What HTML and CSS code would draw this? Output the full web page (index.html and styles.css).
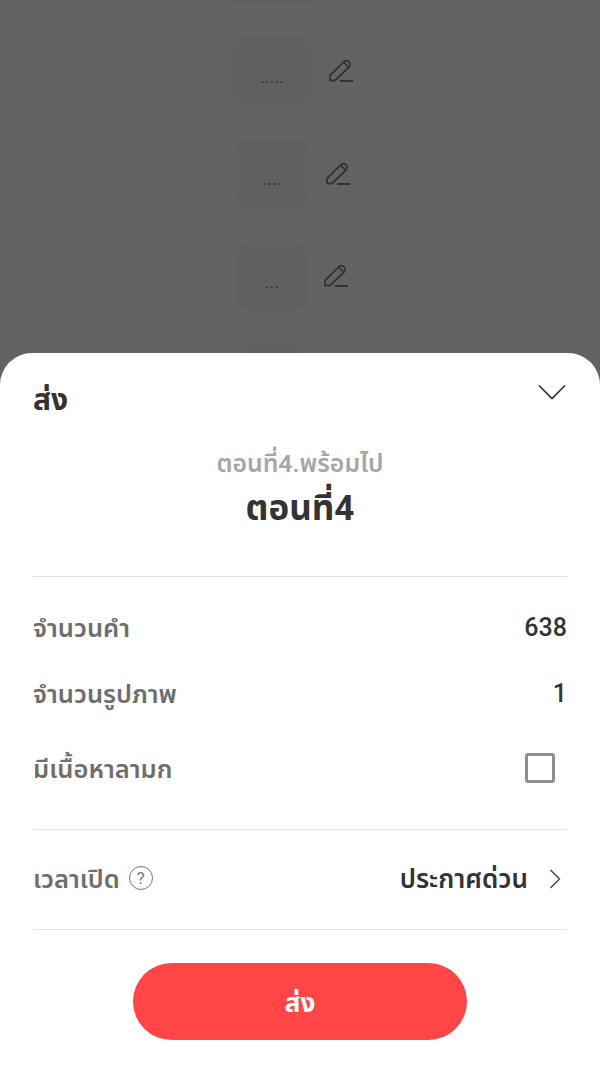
FILE: index.html
```html
<!DOCTYPE html>
<html lang="th">
<head>
<meta charset="utf-8">
<title>ส่ง</title>
<link rel="stylesheet" href="styles.css">
</head>
<body>
<svg class="defs" width="0" height="0" aria-hidden="true">
  <symbol id="pen" viewBox="0 0 26 24">
    <path d="M2 21.5 V16.5 L15.8 2.8 C17.2 1.4 19.6 1.4 21 2.8 C22.4 4.2 22.4 6.6 21 8 L7 21.5 Z M16 3.5 L20.5 8.2" fill="none" stroke="#333" stroke-width="1.8" stroke-linejoin="round"/>
    <path d="M12 22 H25" fill="none" stroke="#333" stroke-width="2"/>
  </symbol>
</svg>
<main class="screen">
  <div class="list">
    <div class="item"><div class="box box-top"></div></div>
    <div class="item"><div class="box box-5"><span class="dots">.....</span></div><svg class="pen"><use href="#pen"/></svg></div>
    <div class="item"><div class="box box-4"><span class="dots">....</span></div><svg class="pen"><use href="#pen"/></svg></div>
    <div class="item"><div class="box box-3"><span class="dots">...</span></div><svg class="pen"><use href="#pen"/></svg></div>
    <div class="item"><div class="box box-2"></div></div>
  </div>
  <section class="sheet">
    <header class="sheet-head">
      <h2 class="sheet-title">ส่ง</h2>
      <svg class="chevron-down" viewBox="0 0 28 16"><path d="M1 1.5 L14 14.5 L27 1.5" fill="none" stroke="#333" stroke-width="1.7"/></svg>
    </header>
    <div class="heading">
      <p class="book">ตอนที่4.พร้อมไป</p>
      <p class="chapter">ตอนที่4</p>
    </div>
    <div class="stats">
      <div class="row row-words"><span class="label">จำนวนคำ</span><span class="value">638</span></div>
      <div class="row row-images"><span class="label">จำนวนรูปภาพ</span><span class="value">1</span></div>
      <div class="row row-adult"><span class="label">มีเนื้อหาลามก</span><span class="check"></span></div>
    </div>
    <div class="row-time">
      <span class="time-left"><span class="label label-time">เวลาเปิด</span><span class="help">?</span></span>
      <span class="time-right"><span class="time-value">ประกาศด่วน</span>
      <svg class="chevron-right" viewBox="0 0 12 20"><path d="M1.5 1 L10.5 10 L1.5 19" fill="none" stroke="#444" stroke-width="1.4"/></svg></span>
    </div>
    <div class="actions"><button class="submit" type="button">ส่ง</button></div>
  </section>
</main>
</body>
</html>
```
FILE: styles.css
```css
* { box-sizing: border-box; }
html, body { margin: 0; padding: 0; }
body { font-family: Roboto, "Noto Sans Thai", "Noto Sans", "Liberation Sans", sans-serif; background: #636363; }
.defs { position: absolute; }
.screen { position: relative; width: 600px; height: 1073px; overflow: hidden; background: #636363; }

.list { display: flex; flex-direction: column; align-items: center; gap: 33.5px; margin-top: -66px; padding-right: 56px; }
.item { display: flex; align-items: center; height: 69px; }
.box { height: 69px; border-radius: 16px; background: #606060; display: flex; align-items: center; justify-content: center; padding-top: 11px; }
.box-top { width: 98px; }
.box-5 { width: 82px; }
.box-4 { width: 76px; }
.box-3 { width: 72px; }
.box-2 { width: 60px; }
.dots { font-size: 18px; color: #3a3a3a; line-height: 1; }
.pen { width: 26px; height: 24px; flex: none; margin-left: 15px; margin-right: -41px; }

.sheet { position: absolute; left: 0; right: 0; bottom: 0; height: 720.5px; background: #fff; border-radius: 32px 32px 0 0; padding: 0 33px; }
.sheet-head { display: flex; justify-content: space-between; align-items: flex-start; height: 80px; }
.sheet-title { margin: 27px 0 0; font-size: 30px; line-height: 40px; font-weight: 700; color: #333; }
.chevron-down { width: 28px; height: 16px; margin: 31px 1px 0 0; }
.heading { text-align: center; height: 144px; border-bottom: 1px solid #e2e2e2; }
.book { margin: 0; padding-top: 14px; font-size: 24.8px; line-height: 34px; font-weight: 600; color: #a6a6a6; }
.chapter { margin: 5px 0 0; font-size: 35px; line-height: 46px; font-weight: 700; color: #333; }

.stats { height: 253px; border-bottom: 1px solid #e2e2e2; padding-top: 32px; display: flex; flex-direction: column; }
.row { display: flex; justify-content: space-between; align-items: center; }
.row-words { height: 38px; }
.row-images { height: 38px; margin-top: 28px; }
.row-adult { height: 38px; margin-top: 37px; padding-right: 12px; }
.label { font-size: 25.5px; line-height: 38px; font-weight: 600; color: #6e6e6e; }
.value { font-size: 25px; line-height: 38px; font-weight: 500; color: #333; padding-top: 1px; }
.check { width: 30px; height: 30px; border: 3px solid #8e8e8e; border-radius: 3px; background: #fff; margin-top: -2px; }

.row-time { height: 100px; display: flex; justify-content: space-between; align-items: center; border-bottom: 1px solid #e2e2e2; }
.time-left { display: flex; align-items: center; gap: 9px; }
.label-time { font-size: 25.5px; }
.help { width: 24px; height: 24px; border: 1px solid #777; border-radius: 50%; font-size: 17px; line-height: 22px; text-align: center; color: #777; margin-top: -2px; }
.time-right { display: flex; align-items: center; gap: 21px; padding-right: 6px; }
.time-value { font-size: 26px; font-weight: 600; color: #333; line-height: 38px; }
.chevron-right { width: 12px; height: 20px; }

.actions { display: flex; justify-content: center; padding-top: 33px; }
.submit { width: 334px; height: 77px; border: 0; border-radius: 39px; background: #ff4646; color: #fff; font: inherit; font-size: 26px; font-weight: 700; padding: 5px 0 0; }
```
